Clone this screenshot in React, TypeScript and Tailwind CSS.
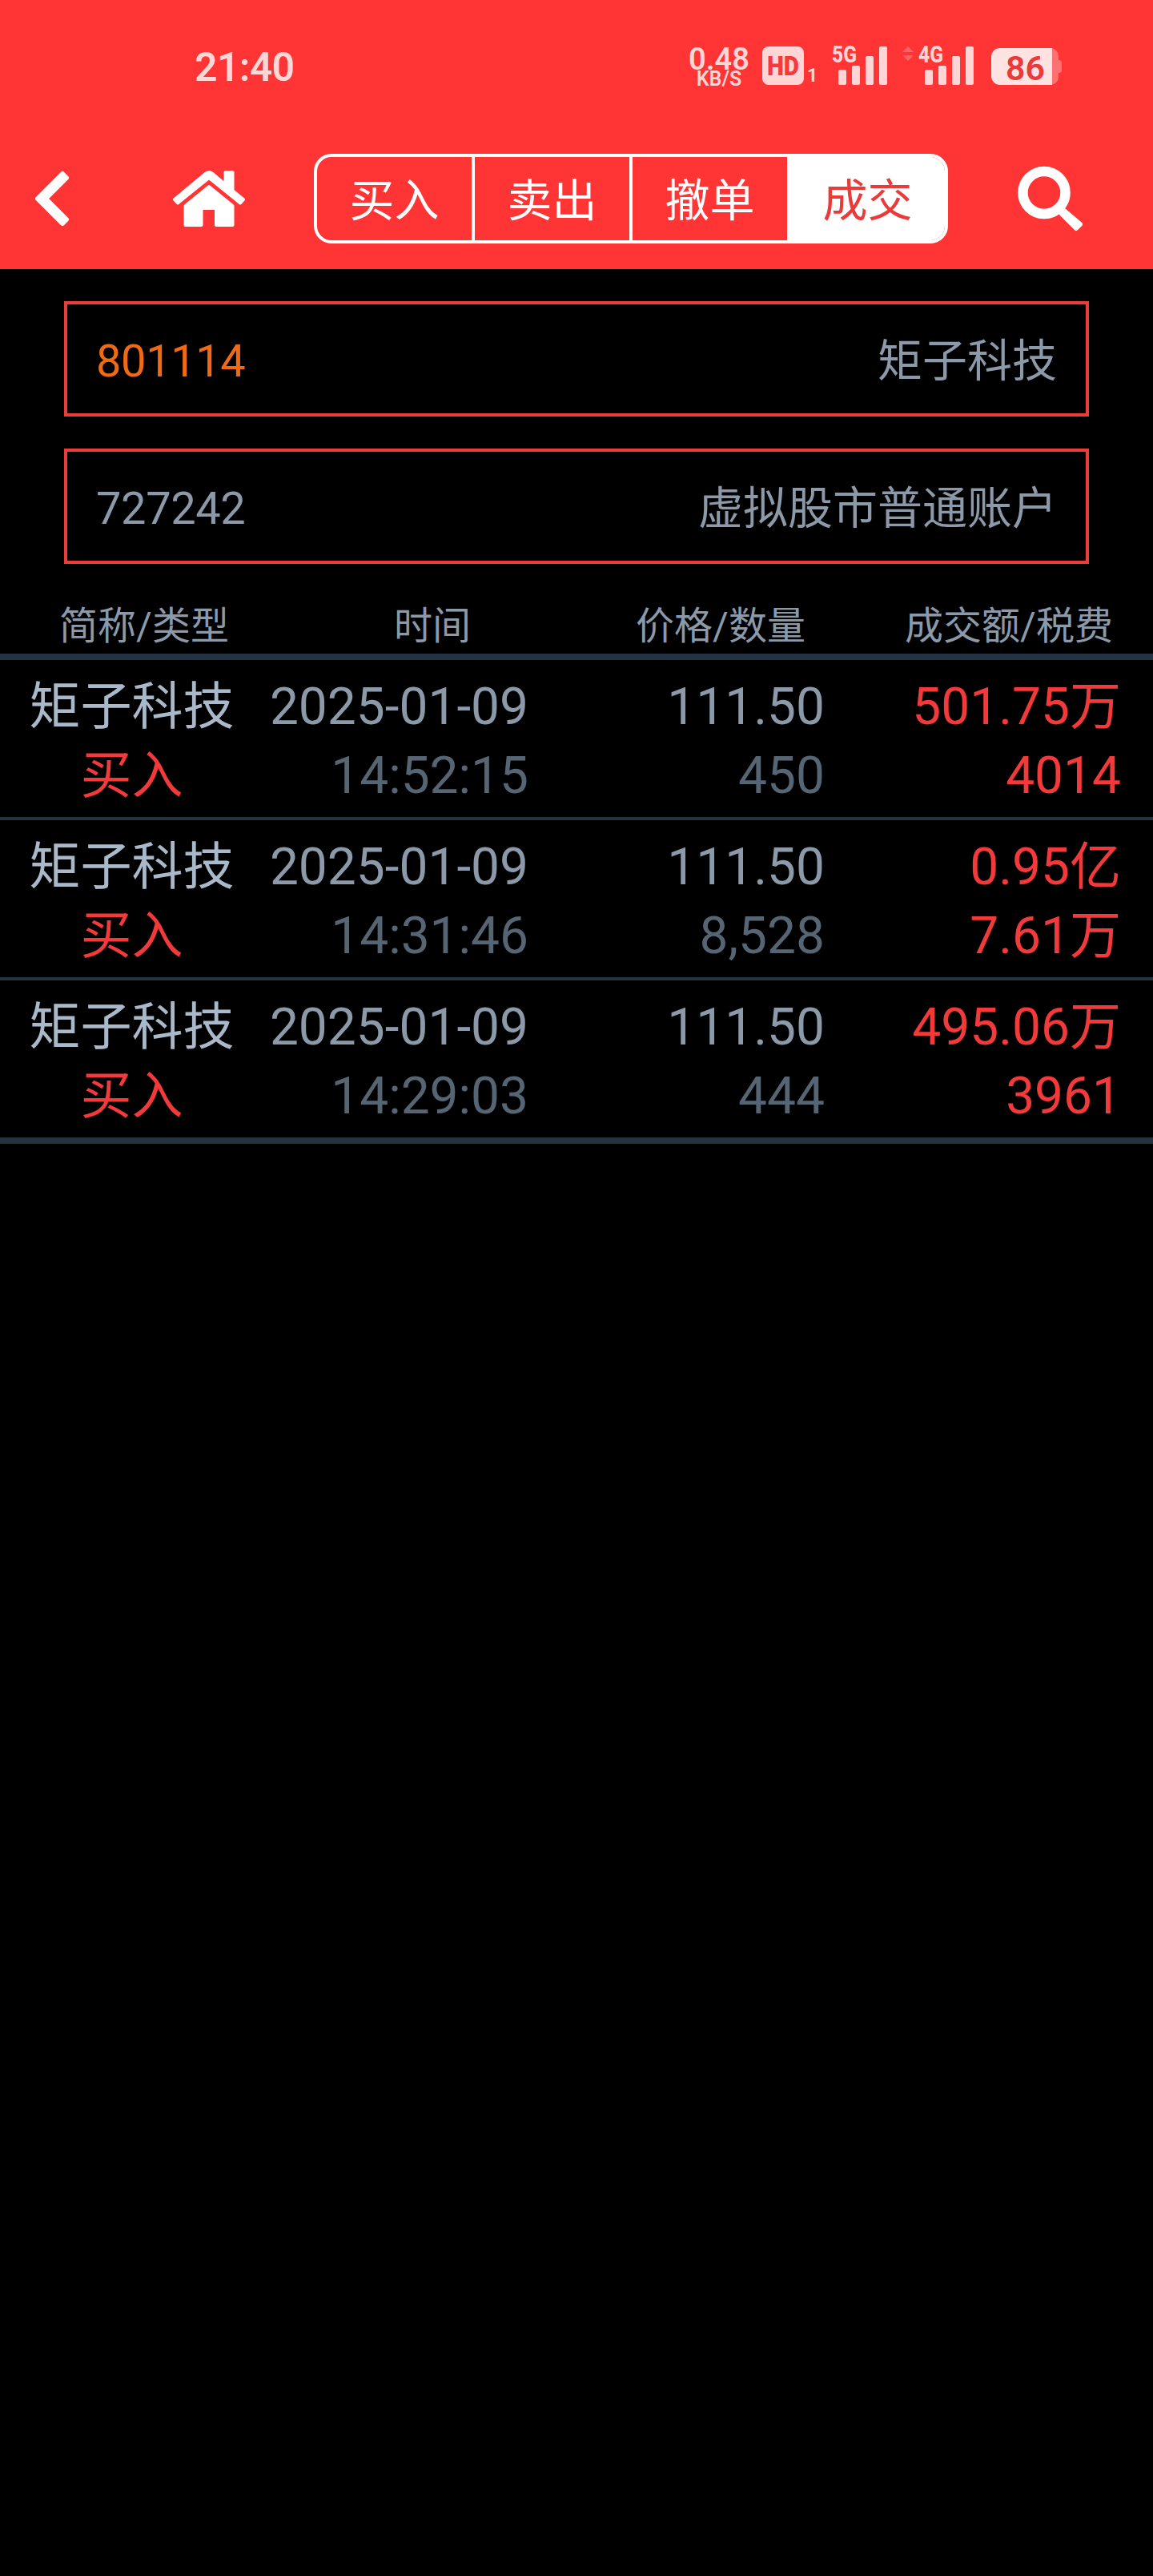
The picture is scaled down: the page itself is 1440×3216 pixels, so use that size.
import React, { ReactNode } from 'react';
import clsx from 'clsx';

interface Deal {
  name: string;
  side: string;
  date: string;
  time: string;
  price: string;
  volume: string;
  amount: string;
  fee: string;
}

const tabs = ['买入', '卖出', '撤单', '成交'];
const columns = ['简称/类型', '时间', '价格/数量', '成交额/税费'];

const deals: Deal[] = [
  {
    name: '矩子科技',
    side: '买入',
    date: '2025-01-09',
    time: '14:52:15',
    price: '111.50',
    volume: '450',
    amount: '501.75万',
    fee: '4014',
  },
  {
    name: '矩子科技',
    side: '买入',
    date: '2025-01-09',
    time: '14:31:46',
    price: '111.50',
    volume: '8,528',
    amount: '0.95亿',
    fee: '7.61万',
  },
  {
    name: '矩子科技',
    side: '买入',
    date: '2025-01-09',
    time: '14:29:03',
    price: '111.50',
    volume: '444',
    amount: '495.06万',
    fee: '3961',
  },
];

/** Signal strength bars with the network label on top */
function Signal({ label, active }: { label: string; active?: boolean }) {
  return (
    <svg className="h-[50px] w-[92px] overflow-visible" viewBox="0 0 92 50" fill="#ffd5d5">
      {active && (
        <g fill="#ff6262">
          <path d="M3 9 L10 2 L17 9 Z" />
          <path d="M3 13 L10 20 L17 13 Z" />
        </g>
      )}
      <text
        x="23"
        y="22"
        fontSize="29"
        fontWeight="800"
        textLength="31"
        lengthAdjust="spacingAndGlyphs"
      >
        {label}
      </text>
      <rect x="31" y="31" width="10" height="19" rx="2" />
      <rect x="48" y="26" width="10" height="24" rx="2" />
      <rect x="65" y="14" width="10" height="36" rx="2" />
      <rect x="82" y="2" width="10" height="48" rx="2" />
    </svg>
  );
}

function StatusBar() {
  return (
    <div className="flex h-40 items-start justify-between pl-[243px] pr-[114px] pt-14 text-[#ffd5d5]">
      <span className="text-[50px] leading-[56px] font-semibold tracking-[-0.7px]">21:40</span>
      <div className="flex items-start">
        <div className="flex w-[76px] flex-col items-center">
          <span className="mt-px text-[38px] leading-[35px] font-semibold">0.48</span>
          <span className="-mt-[3px] text-[25px] leading-5 font-semibold">KB/S</span>
        </div>
        <svg className="ml-4 h-[52px] w-[68px] overflow-visible" viewBox="0 0 68 52">
          <rect y="2" width="52" height="48" rx="8" fill="#ffd5d5" />
          <text
            x="6"
            y="38"
            fontSize="34"
            fontWeight="900"
            fill="#f43a3a"
            textLength="40"
            lengthAdjust="spacingAndGlyphs"
          >
            HD
          </text>
          <text x="56" y="46" fontSize="23" fontWeight="700" fill="#ffd5d5">
            1
          </text>
        </svg>
        <div className="-ml-[4px]">
          <Signal label="5G" />
        </div>
        <div className="ml-4">
          <Signal label="4G" active />
        </div>
        <svg className="ml-[22px] h-[52px] w-[88px] overflow-visible" viewBox="0 0 88 52">
          <path d="M76 4 h-2 a10 10 0 0 1 10 10 v5 h1 a3 3 0 0 1 3 3 v10 a3 3 0 0 1 -3 3 h-1 v5 a10 10 0 0 1 -10 10 Z" fill="#ff7070" />
          <path d="M11 4 H76 V50 H11 A11 11 0 0 1 0 39 V15 A11 11 0 0 1 11 4 Z" fill="#ffe3e3" />
          <text
            x="18"
            y="44"
            fontSize="42"
            fontWeight="600"
            fill="#ea3a3a"
            textLength="49"
            lengthAdjust="spacingAndGlyphs"
          >
            86
          </text>
        </svg>
      </div>
    </div>
  );
}

function BackIcon() {
  return (
    <svg className="h-[70px] w-[44px]" viewBox="43 213 44 70" fill="white" stroke="white" strokeWidth="6" strokeLinejoin="round">
      <path d="M47 248 L78 217 L83 222 L57 248 L83 274 L78 279 Z" />
    </svg>
  );
}

function HomeIcon() {
  return (
    <svg className="h-[72px] w-[92px]" viewBox="215 212 92 72" fill="white" stroke="white" strokeWidth="4" strokeLinejoin="round">
      <path d="M218 249 L257 216.500 Q261 213.500 265 216.500 L281.500 230.500 V215 H290.500 V238 L304 249 L300 253.500 L261 222 L222 253.500 Z" />
      <path d="M231.500 257 L261 233 L290.500 257 V281 H270 V260 H251.500 V281 H231.500 Z" />
    </svg>
  );
}

function SearchIcon() {
  return (
    <svg className="h-[82px] w-[82px]" viewBox="1271 207 82 82" fill="none" stroke="white">
      <circle cx="1304" cy="240.500" r="26.500" strokeWidth="12.500" />
      <path d="M1329 263 L1349 280 L1344 285 L1326 267 Z" fill="white" strokeWidth="6" strokeLinejoin="round" />
    </svg>
  );
}

function NavBar() {
  return (
    <div className="flex h-44 items-center">
      <button className="ml-[43px]" aria-label="返回">
        <BackIcon />
      </button>
      <button className="ml-32" aria-label="首页">
        <HomeIcon />
      </button>
      <div className="ml-[85px] flex h-28 w-[792px] overflow-hidden rounded-[22px] border-4 border-white">
        {tabs.map((tab, i) => (
          <button
            key={tab}
            className={clsx(
              'flex flex-1 items-center justify-center pt-[6px] text-[56px] leading-none',
              i > 0 && 'border-l-4 border-white',
              i === 3 ? 'bg-white text-[#ea3b3b]' : 'text-white',
            )}
          >
            {tab}
          </button>
        ))}
      </div>
      <button className="ml-[87px]" aria-label="搜索">
        <SearchIcon />
      </button>
    </div>
  );
}

function Field({ code, name, codeClass }: { code: string; name: string; codeClass?: string }) {
  return (
    <div className="flex h-36 items-center justify-between border-4 border-[#ec3b3b] px-9 pt-[6px] text-[56px] leading-none text-[#8b99a9]">
      <span className={clsx('tracking-[-0.4px]', codeClass)}>{code}</span>
      <span>{name}</span>
    </div>
  );
}

function Cell({ top, bottom, className }: { top: ReactNode; bottom: ReactNode; className?: string }) {
  return (
    <div className={clsx('flex flex-col', className)}>
      <span>{top}</span>
      <span>{bottom}</span>
    </div>
  );
}

function DealRow({ deal, last }: { deal: Deal; last: boolean }) {
  return (
    <div
      className={clsx(
        'flex border-[#243342] pt-4 text-[64px] leading-[86px] whitespace-nowrap',
        last ? 'h-[204px] border-b-8' : 'h-[200px] border-b-4',
      )}
    >
      <Cell
        className="w-[329px] items-center text-[#a9b9c9]"
        top={deal.name}
        bottom={<span className="text-[#f23a3a]">{deal.side}</span>}
      />
      <Cell
        className="w-[331px] items-end text-[#8b99a9]"
        top={deal.date}
        bottom={<span className="text-[#566573]">{deal.time}</span>}
      />
      <Cell
        className="w-[370px] items-end text-[#8b99a9]"
        top={deal.price}
        bottom={<span className="text-[#566573]">{deal.volume}</span>}
      />
      <Cell className="w-[370px] items-end text-[#f23a3a]" top={deal.amount} bottom={deal.fee} />
    </div>
  );
}

export default function App() {
  return (
    <div className="h-[3216px] w-[1440px] overflow-hidden bg-black font-[Roboto,'Noto_Sans_CJK_SC',sans-serif]">
      <header className="h-[336px] bg-[#ff3434]">
        <StatusBar />
        <NavBar />
      </header>

      <section className="flex flex-col gap-10 px-20 pt-10">
        <Field code="801114" name="矩子科技" codeClass="text-[#f06a14]" />
        <Field code="727242" name="虚拟股市普通账户" />
      </section>

      <main>
        <div className="mt-10 grid h-20 grid-cols-4 border-b-8 border-[#243342] text-center text-[48px] leading-[76px] text-[#8b99a9]">
          {columns.map((column) => (
            <span key={column}>{column}</span>
          ))}
        </div>
        {deals.map((deal, i) => (
          <DealRow key={deal.time} deal={deal} last={i === deals.length - 1} />
        ))}
      </main>
    </div>
  );
}
